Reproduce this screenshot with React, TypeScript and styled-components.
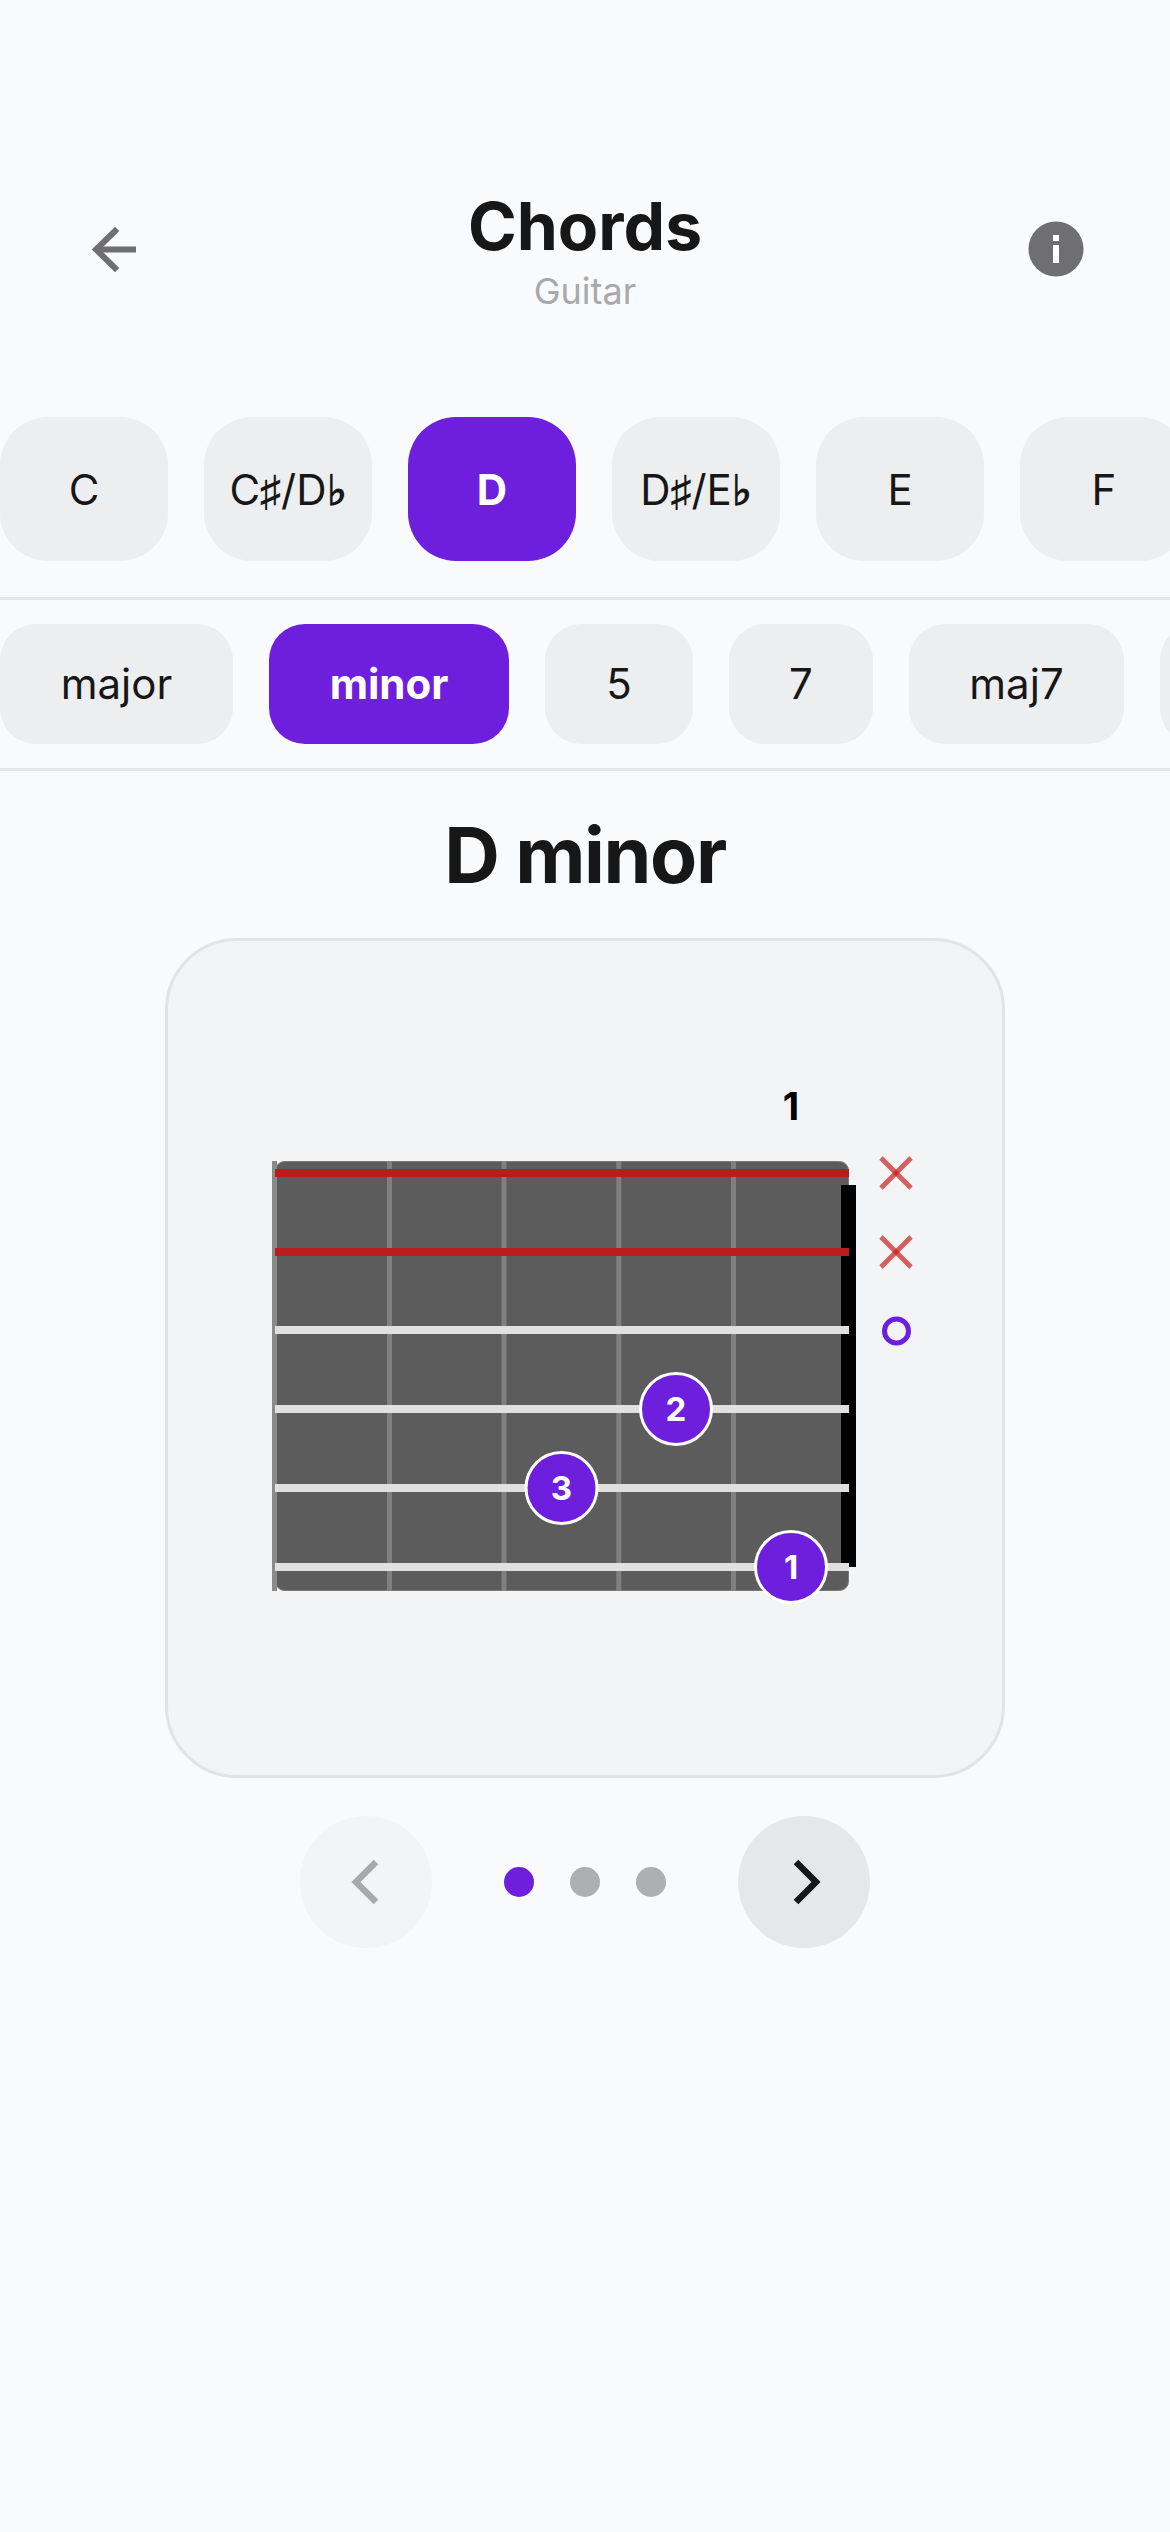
import React from "react";
import styled, { createGlobalStyle } from "styled-components";

const GlobalStyle = createGlobalStyle`
  html, body { margin: 0; padding: 0; background: #f9fafc; }
  body { font-family: "Inter", "Liberation Sans", sans-serif; color: #171717; }
`;

const Page = styled.div`
  width: 1170px;
  height: 2532px;
  overflow: hidden;
  background: #f9fafc;
  display: flex;
  flex-direction: column;
  align-items: stretch;
`;

const Header = styled.header`
  height: 417px;
  box-sizing: border-box;
  padding: 188px 84px 0 84px;
  display: flex;
  justify-content: space-between;
  align-items: flex-start;
`;

const HeaderIcon = styled.div`
  width: 60px;
  height: 121px;
  display: flex;
  align-items: center;
  justify-content: center;
`;

const TitleBlock = styled.div`
  display: flex;
  flex-direction: column;
  align-items: center;
`;

const Title = styled.h1`
  margin: 0;
  font-size: 66px;
  line-height: 76px;
  font-weight: 700;
  color: #171717;
`;

const Subtitle = styled.div`
  margin-top: 7px;
  font-size: 36px;
  line-height: 40px;
  font-weight: 400;
  color: #a9a9ac;
`;

const ChipRow = styled.div<{ $gapBelow: number }>`
  display: flex;
  flex-wrap: nowrap;
  gap: 36px;
  overflow: hidden;
  padding-bottom: ${(p) => p.$gapBelow}px;
  border-bottom: 3px solid #e5e5e8;
`;

const RootChip = styled.div<{ $active?: boolean }>`
  flex: 0 0 168px;
  height: 144px;
  border-radius: 48px;
  display: flex;
  align-items: center;
  justify-content: center;
  font-size: 42px;
  font-weight: ${(p) => (p.$active ? 700 : 400)};
  color: ${(p) => (p.$active ? "#ffffff" : "#171717")};
  background: ${(p) => (p.$active ? "#6d1fdd" : "#edeef0")};
`;

const Accidental = styled.span`
  font-weight: 700;
`;

const TypeRow = styled(ChipRow)`
  padding-top: 24px;
`;

const TypeChip = styled.div<{ $active?: boolean; $w: number }>`
  flex: 0 0 ${(p) => p.$w}px;
  height: 120px;
  box-sizing: border-box;
  padding-bottom: 2px;
  border-radius: 36px;
  display: flex;
  align-items: center;
  justify-content: center;
  font-size: 42px;
  font-weight: ${(p) => (p.$active ? 700 : 400)};
  color: ${(p) => (p.$active ? "#ffffff" : "#171717")};
  background: ${(p) => (p.$active ? "#6d1fdd" : "#edeef0")};
`;

const ChordName = styled.h2`
  margin: 37px 0 0;
  text-align: center;
  font-size: 77px;
  line-height: 94px;
  font-weight: 700;
  letter-spacing: -1.4px;
  color: #171717;
`;

const Card = styled.div`
  align-self: center;
  margin-top: 36px;
  width: 840px;
  height: 840px;
  box-sizing: border-box;
  background: #f3f4f6;
  border: 3px solid #e2e3e6;
  border-radius: 72px;
`;

const Diagram = styled.svg`
  display: block;
`;

const Pager = styled.div`
  margin-top: 38px;
  display: flex;
  justify-content: center;
  align-items: center;
  gap: 72px;
`;

const RoundButton = styled.div<{ $enabled?: boolean }>`
  width: 132px;
  height: 132px;
  border-radius: 50%;
  display: flex;
  align-items: center;
  justify-content: center;
  background: ${(p) => (p.$enabled ? "#e6e7e9" : "#f3f4f6")};
  color: ${(p) => (p.$enabled ? "#171717" : "#a9a9ac")};
`;

const Dots = styled.div`
  display: flex;
  gap: 36px;
`;

const Dot = styled.div<{ $active?: boolean }>`
  width: 30px;
  height: 30px;
  border-radius: 50%;
  background: ${(p) => (p.$active ? "#6d1fdd" : "#aeafb2")};
`;

const roots: { id: string; label: React.ReactNode }[] = [
  { id: "C", label: "C" },
  { id: "C#", label: <>C<Accidental>♯</Accidental>/D<Accidental>♭</Accidental></> },
  { id: "D", label: "D" },
  { id: "D#", label: <>D<Accidental>♯</Accidental>/E<Accidental>♭</Accidental></> },
  { id: "E", label: "E" },
  { id: "F", label: "F" },
];
const types: { label: string; w: number }[] = [
  { label: "major", w: 233 },
  { label: "minor", w: 240 },
  { label: "5", w: 148 },
  { label: "7", w: 144 },
  { label: "maj7", w: 215 },
  { label: "", w: 180 },
];

// Diagram coordinates: origin at the card's inner top-left corner (168, 941 on the page)
const OX = 168;
const OY = 941;
const stringYs = [1173, 1252, 1330, 1409, 1488, 1567].map((y) => y - OY);
const fretXs = [274.5, 389.5, 504, 618.8, 733.5].map((x) => x - OX);
const fingers = [
  { x: 676, y: 1409, n: 2 },
  { x: 561.5, y: 1488, n: 3 },
  { x: 791, y: 1567, n: 1 },
];

function FretDiagram() {
  const left = 275 - OX;
  const right = 849 - OX;
  const top = 1161 - OY;
  const bottom = 1591 - OY;
  const mx = 896 - OX;
  return (
    <Diagram width="834" height="834" viewBox="0 0 834 834">
      <rect
        x={left + 0.5}
        y={top + 0.5}
        width={right - left - 1}
        height={bottom - top - 1}
        rx="9"
        fill="#5c5c5c"
        stroke="#7a7a7a"
        strokeWidth="1"
      />
      {fretXs.map((x, i) => (
        <rect key={i} x={x - 2.5} y={top} width="5" height={bottom - top} fill={i === 0 ? "#8a8a8a" : "#808080"} />
      ))}
      <rect x={841 - OX} y={1185 - OY} width="15" height={1567 - 1185} fill="#000000" />
      {stringYs.map((y, i) => (
        <rect
          key={i}
          x={left}
          y={y - 4}
          width={right - left}
          height="8"
          fill={i < 2 ? "#b91c1c" : "#e0e0e0"}
        />
      ))}
      {fingers.map((f) => (
        <g key={f.n}>
          <circle cx={f.x - OX} cy={f.y - OY} r="35.5" fill="#6d1fdd" stroke="#ffffff" strokeWidth="3" />
          <text
            x={f.x - OX}
            y={f.y - OY + 12}
            textAnchor="middle"
            fontFamily="Inter, sans-serif"
            fontWeight="700"
            fontSize="33"
            fill="#ffffff"
          >
            {f.n}
          </text>
        </g>
      ))}
      <text
        x={791 - OX}
        y={1120 - OY}
        textAnchor="middle"
        fontFamily="Inter, sans-serif"
        fontWeight="700"
        fontSize="38"
        fill="#000000"
      >
        1
      </text>
      {[stringYs[0], stringYs[1]].map((y, i) => (
        <g key={i} stroke="#c81e1e" strokeOpacity="0.7" strokeWidth="5">
          <line x1={mx - 15} y1={y - 15} x2={mx + 15} y2={y + 15} />
          <line x1={mx + 15} y1={y - 15} x2={mx - 15} y2={y + 15} />
        </g>
      ))}
      <circle cx={mx + 0.5} cy={stringYs[2] + 1} r="12" fill="none" stroke="#6d1fdd" strokeWidth="5" />
    </Diagram>
  );
}

function BackArrow() {
  return (
    <svg width="48" height="48" viewBox="0 0 48 48" fill="none" stroke="#6e6e73" strokeWidth="6" strokeLinejoin="miter">
      <path d="M46 24.5H8" />
      <path d="M25 6L6 24.5 25 43" strokeLinecap="square" />
    </svg>
  );
}

function InfoIcon() {
  return (
    <svg width="56" height="56" viewBox="0 0 56 56">
      <circle cx="28" cy="28" r="27.5" fill="#6e6e73" />
      <rect x="25" y="14" width="6" height="6" fill="#ffffff" />
      <rect x="25" y="24" width="6" height="18" fill="#ffffff" />
    </svg>
  );
}

function Chevron({ dir }: { dir: "left" | "right" }) {
  return (
    <svg width="48" height="48" viewBox="0 0 48 48" fill="none" stroke="currentColor" strokeWidth="6.5">
      <path d={dir === "left" ? "M34 4L14 24l20 20" : "M16 4l20 20-20 20"} />
    </svg>
  );
}

export default function App() {
  return (
    <Page>
      <GlobalStyle />
      <Header>
        <HeaderIcon>
          <BackArrow />
        </HeaderIcon>
        <TitleBlock>
          <Title>Chords</Title>
          <Subtitle>Guitar</Subtitle>
        </TitleBlock>
        <HeaderIcon>
          <InfoIcon />
        </HeaderIcon>
      </Header>
      <ChipRow $gapBelow={36}>
        {roots.map((r) => (
          <RootChip key={r.id} $active={r.id === "D"}>
            {r.label}
          </RootChip>
        ))}
      </ChipRow>
      <TypeRow $gapBelow={24}>
        {types.map((t, i) => (
          <TypeChip key={i} $w={t.w} $active={t.label === "minor"}>
            {t.label}
          </TypeChip>
        ))}
      </TypeRow>
      <ChordName>D minor</ChordName>
      <Card>
        <FretDiagram />
      </Card>
      <Pager>
        <RoundButton>
          <Chevron dir="left" />
        </RoundButton>
        <Dots>
          <Dot $active />
          <Dot />
          <Dot />
        </Dots>
        <RoundButton $enabled>
          <Chevron dir="right" />
        </RoundButton>
      </Pager>
    </Page>
  );
}
